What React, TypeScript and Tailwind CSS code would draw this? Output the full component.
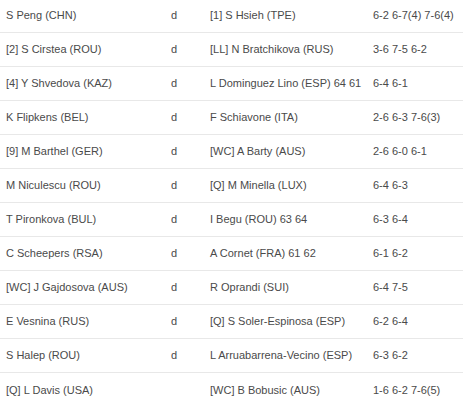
const matches = [
  ['S Peng (CHN)', 'd', '[1] S Hsieh (TPE)', '6-2 6-7(4) 7-6(4)'],
  ['[2] S Cirstea (ROU)', 'd', '[LL] N Bratchikova (RUS)', '3-6 7-5 6-2'],
  ['[4] Y Shvedova (KAZ)', 'd', 'L Dominguez Lino (ESP) 64 61', '6-4 6-1'],
  ['K Flipkens (BEL)', 'd', 'F Schiavone (ITA)', '2-6 6-3 7-6(3)'],
  ['[9] M Barthel (GER)', 'd', '[WC] A Barty (AUS)', '2-6 6-0 6-1'],
  ['M Niculescu (ROU)', 'd', '[Q] M Minella (LUX)', '6-4 6-3'],
  ['T Pironkova (BUL)', 'd', 'I Begu (ROU) 63 64', '6-3 6-4'],
  ['C Scheepers (RSA)', 'd', 'A Cornet (FRA) 61 62', '6-1 6-2'],
  ['[WC] J Gajdosova (AUS)', 'd', 'R Oprandi (SUI)', '6-4 7-5'],
  ['E Vesnina (RUS)', 'd', '[Q] S Soler-Espinosa (ESP)', '6-2 6-4'],
  ['S Halep (ROU)', 'd', 'L Arruabarrena-Vecino (ESP)', '6-3 6-2'],
  ['[Q] L Davis (USA)', '', '[WC] B Bobusic (AUS)', '1-6 6-2 7-6(5)'],
];

export default function App() {
  return (
    <div className="w-[463px] h-[408px] overflow-hidden bg-white text-[11px] text-[#4a4a4a] font-['Liberation_Sans',Arial,sans-serif]">
      <div className="-mt-px">
        {matches.map((m, i) => (
          <div
            key={i}
            className="grid grid-cols-[171px_39px_163px_1fr] h-[34px] items-center border-b border-[#e8e8e8] last:border-b-0"
          >
            <div className="pl-[6px] whitespace-nowrap">{m[0]}</div>
            <div>{m[1]}</div>
            <div className="whitespace-nowrap">{m[2]}</div>
            <div className="whitespace-nowrap">{m[3]}</div>
          </div>
        ))}
      </div>
    </div>
  );
}
